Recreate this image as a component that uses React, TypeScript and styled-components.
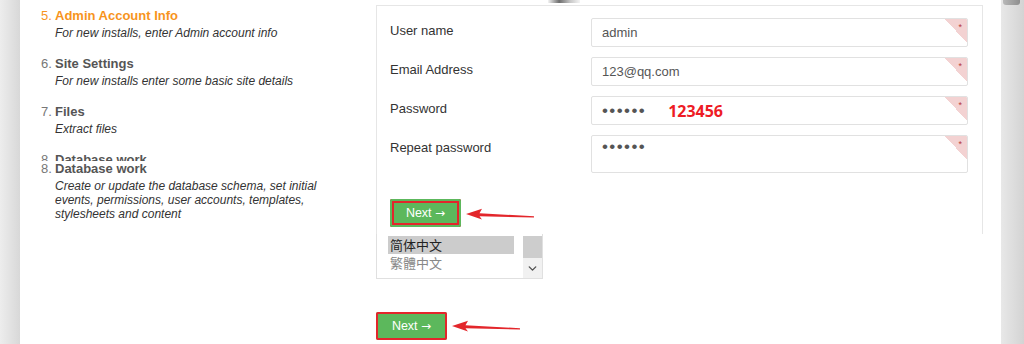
import React from "react";
import styled, { createGlobalStyle } from "styled-components";
import { ChevronDown } from "lucide-react";

const GlobalStyle = createGlobalStyle`
  html, body {
    margin: 0;
    padding: 0;
    background: #fff;
  }
  body {
    font-family: "Liberation Sans", Arial, sans-serif;
    width: 1024px;
    height: 344px;
    overflow: hidden;
  }
`;

const Page = styled.div`
  display: flex;
  width: 1024px;
  height: 344px;
`;

const LeftEdge = styled.div`
  width: 20px;
  flex: none;
  background: linear-gradient(to right, #ededed, #d8d8d8);
`;

const RightEdge = styled.div`
  width: 23px;
  flex: none;
  display: flex;
  flex-direction: column;
  background: linear-gradient(to right, #e8e8e8, #d3d3d3);
`;

const EdgeCap = styled.div`
  height: 5px;
  margin: 0 4px 0 2px;
  border-radius: 0 0 3px 3px;
  background: linear-gradient(to right, #b8b8b8, #8f8f8f);
`;

const Main = styled.div`
  flex: 1;
  display: flex;
  background: #fff;
`;

const Sidebar = styled.div`
  width: 335px;
  flex: none;
  padding: 8px 0 0 21px;
`;

const Clip = styled.div`
  height: 153px;
  overflow: hidden;
  display: flex;
  flex-direction: column;
  gap: 16px;
`;

const Step = styled.div`
  display: flex;
  flex-direction: column;
`;

const StepTitle = styled.div<{ $active?: boolean }>`
  display: flex;
  font-size: 13px;
  line-height: 16px;
  color: ${({ $active }) => ($active ? "#f7941d" : "#555")};
`;

const StepNum = styled.span<{ $active?: boolean }>`
  width: 14px;
  flex: none;
  color: ${({ $active }) => ($active ? "#f7941d" : "#777")};
`;

const StepName = styled.span`
  font-weight: 700;
`;

const StepDesc = styled.div`
  margin: 2px 0 0 14px;
  max-width: 264px;
  font-size: 12px;
  line-height: 14px;
  font-style: italic;
  color: #333;
`;

const Content = styled.div`
  flex: 1;
  display: flex;
  flex-direction: column;
`;

const TopBand = styled.div`
  height: 5px;
  display: flex;
`;

const Thumb = styled.div`
  margin-left: 172px;
  width: 32px;
  height: 3px;
  background: linear-gradient(to right, #f4f4f4, #6e6e6e 35%, #c8c8c8 70%, #f4f4f4);
`;

const Panel = styled.div`
  width: 578px;
  height: 216px;
  padding: 12px 14px 0 13px;
  border: 1px solid #e6e6e6;
  border-bottom: none;
  display: flex;
  flex-direction: column;
  gap: 10px;
`;

const Row = styled.div`
  display: flex;
  align-items: flex-start;
`;

const Label = styled.div`
  width: 201px;
  flex: none;
  padding-top: 5px;
  font-size: 13px;
  line-height: 16px;
  color: #333;
`;

const Field = styled.div<{ $tall?: boolean }>`
  position: relative;
  width: 365px;
  height: ${({ $tall }) => ($tall ? 36 : 27)}px;
  padding: 0 0 0 10px;
  border: 1px solid #e1e1e1;
  border-radius: 2px;
  display: flex;
  align-items: ${({ $tall }) => ($tall ? "flex-start" : "center")};
  font-size: 13px;
  color: #555;
  overflow: hidden;

  &::after {
    content: "";
    position: absolute;
    top: 0;
    right: 0;
    width: 22px;
    height: 24px;
    background: linear-gradient(to bottom left, #f3d2d2 50%, transparent 50%);
  }
`;

const FieldText = styled.span<{ $tall?: boolean }>`
  padding-top: ${({ $tall }) => ($tall ? 6 : 0)}px;
`;

const Required = styled.span`
  position: absolute;
  top: 3px;
  right: 5px;
  z-index: 1;
  font-size: 9px;
  color: #b8383a;
`;

const Dots = styled.span<{ $tall?: boolean }>`
  padding-top: ${({ $tall }) => ($tall ? 2 : 0)}px;
  font-size: 17px;
  line-height: 18px;
  letter-spacing: 1.4px;
  color: #555;
`;

const Annotation = styled.span`
  margin-left: 22px;
  font-family: "Open Sans", "Liberation Sans", sans-serif;
  font-weight: 700;
  font-size: 16px;
  color: #ee1c25;
`;

const ButtonRow = styled.div<{ $top: number }>`
  display: flex;
  align-items: center;
  gap: 4px;
  margin-top: ${({ $top }) => $top}px;
`;

const NextButton = styled.button<{ $inset?: boolean }>`
  width: 71px;
  height: 28px;
  padding: 0;
  border: none;
  border-radius: 2px;
  background: #5cb85c;
  box-shadow: ${({ $inset }) =>
    $inset
      ? "inset 0 0 0 2px #5cb85c, inset 0 0 0 4px #e3262b"
      : "inset 0 0 0 2px #e3262b"};
  font-family: "Liberation Sans", Arial, sans-serif;
  font-size: 12.5px;
  color: #fff;
  cursor: pointer;
`;

const ArrowGlyph = styled.span`
  font-family: "DejaVu Sans", sans-serif;
  font-size: 12px;
`;

const ListBox = styled.div`
  width: 165px;
  height: 44px;
  border: 1px solid #e0e0e0;
  border-top: none;
  display: flex;
  justify-content: space-between;
`;

const Options = styled.div`
  width: 126px;
  margin: 2px 0 0 11px;
  display: flex;
  flex-direction: column;
`;

const Option = styled.div<{ $selected?: boolean }>`
  height: 18px;
  line-height: 18px;
  padding-left: 2px;
  font-family: "Noto Sans CJK SC", sans-serif;
  font-size: 13px;
  color: ${({ $selected }) => ($selected ? "#222" : "#888")};
  background: ${({ $selected }) => ($selected ? "#cccccc" : "transparent")};
`;

const ScrollBar = styled.div`
  width: 19px;
  margin-top: 2px;
  display: flex;
  flex-direction: column;
  background: #f1f1f1;
`;

const ScrollThumb = styled.div`
  height: 22px;
  background: #cdcdcd;
`;

const ScrollArrow = styled.div`
  flex: 1;
  display: flex;
  align-items: center;
  justify-content: center;
  color: #505050;
`;

const Arrow = ({ offset = 0 }: { offset?: number }) => (
  <svg width="70" height="14" viewBox="0 0 70 14" style={{ marginTop: offset }}>
    <path d="M1 6 L17 0.8 L14.5 5.2 L69 8.3 L69 9.6 L14.5 8.2 L17 11.6 Z" fill="#e3262b" />
  </svg>
);

type StepData = { num: string; name: string; desc: string; active?: boolean };

const steps: StepData[] = [
  { num: "5.", name: "Admin Account Info", desc: "For new installs, enter Admin account info", active: true },
  { num: "6.", name: "Site Settings", desc: "For new installs enter some basic site details" },
  { num: "7.", name: "Files", desc: "Extract files" },
  {
    num: "8.",
    name: "Database work",
    desc: "Create or update the database schema, set initial events, permissions, user accounts, templates, stylesheets and content",
  },
];

const StepItem = ({ step }: { step: StepData }) => (
  <Step>
    <StepTitle $active={step.active}>
      <StepNum $active={step.active}>{step.num}</StepNum>
      <StepName>{step.name}</StepName>
    </StepTitle>
    <StepDesc>{step.desc}</StepDesc>
  </Step>
);

const Next = ({ inset }: { inset?: boolean }) => (
  <NextButton $inset={inset}>
    Next <ArrowGlyph>→</ArrowGlyph>
  </NextButton>
);

export default function App() {
  return (
    <>
      <GlobalStyle />
      <Page>
        <LeftEdge />
        <Main>
          <Sidebar>
            <Clip>
              {steps.map((s) => (
                <StepItem key={s.num} step={s} />
              ))}
            </Clip>
            <StepItem step={steps[3]} />
          </Sidebar>
          <Content>
            <TopBand>
              <Thumb />
            </TopBand>
            <Panel>
              <Row>
                <Label>User name</Label>
                <Field>
                  <FieldText>admin</FieldText>
                  <Required>*</Required>
                </Field>
              </Row>
              <Row>
                <Label>Email Address</Label>
                <Field>
                  <FieldText>123@qq.com</FieldText>
                  <Required>*</Required>
                </Field>
              </Row>
              <Row>
                <Label>Password</Label>
                <Field>
                  <Dots>••••••</Dots>
                  <Annotation>123456</Annotation>
                  <Required>*</Required>
                </Field>
              </Row>
              <Row>
                <Label>Repeat password</Label>
                <Field $tall>
                  <Dots $tall>
                    <FieldText $tall>••••••</FieldText>
                  </Dots>
                  <Required>*</Required>
                </Field>
              </Row>
              <ButtonRow $top={16}>
                <Next inset />
                <Arrow offset={4} />
              </ButtonRow>
            </Panel>
            <ListBox>
              <Options>
                <Option $selected>简体中文</Option>
                <Option>繁體中文</Option>
              </Options>
              <ScrollBar>
                <ScrollThumb />
                <ScrollArrow>
                  <ChevronDown size={13} strokeWidth={2.5} />
                </ScrollArrow>
              </ScrollBar>
            </ListBox>
            <ButtonRow $top={33}>
              <Next />
              <Arrow offset={2} />
            </ButtonRow>
          </Content>
        </Main>
        <RightEdge>
          <EdgeCap />
        </RightEdge>
      </Page>
    </>
  );
}
